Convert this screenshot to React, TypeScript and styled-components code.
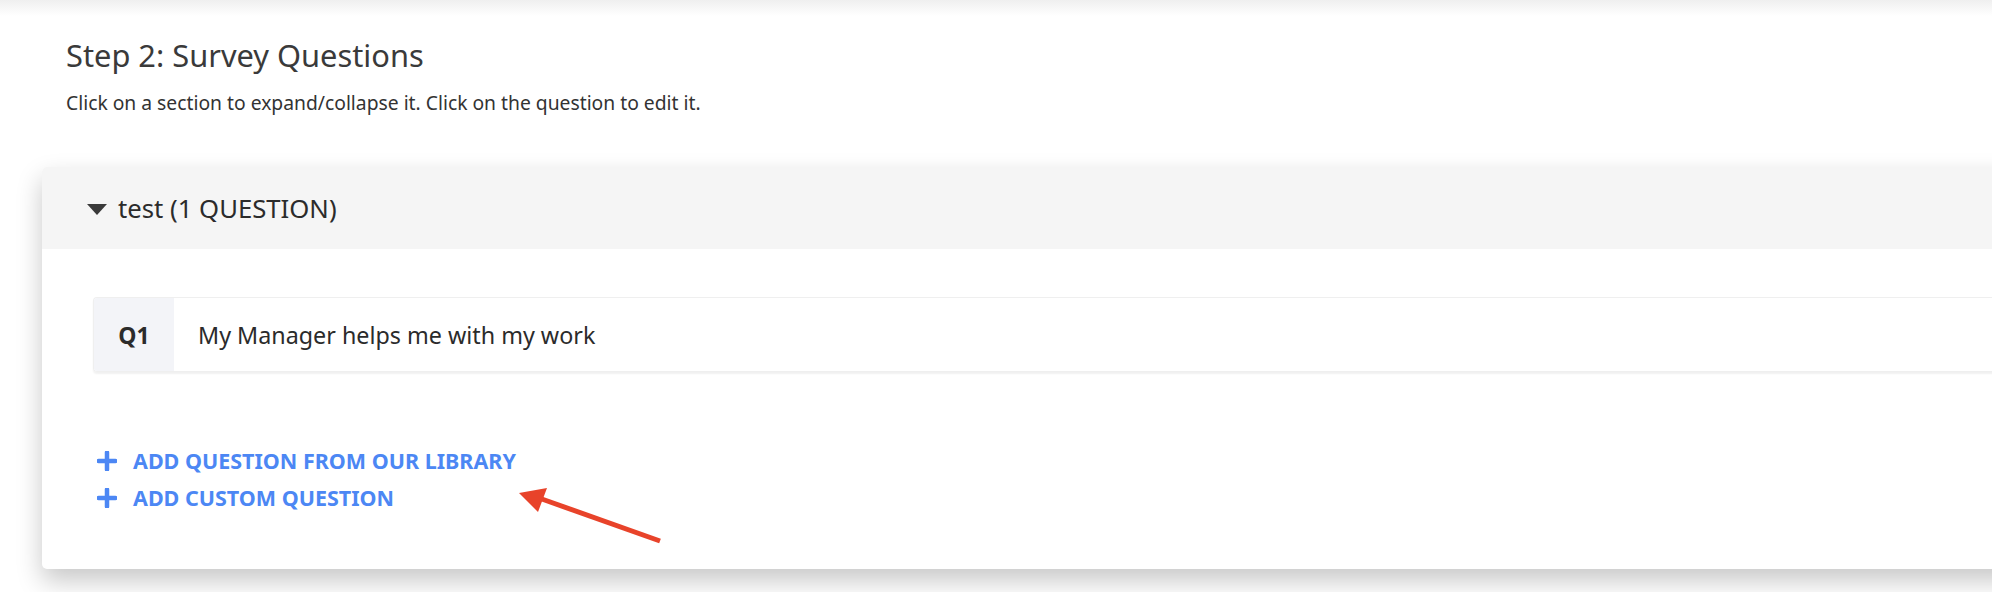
import styled, { createGlobalStyle } from "styled-components";

const GlobalStyle = createGlobalStyle`
  html, body {
    margin: 0;
    padding: 0;
    background: #ffffff;
    overflow: hidden;
  }
  body {
    font-family: "Noto Sans", Roboto, sans-serif;
    color: #333333;
  }
`;

const Page = styled.div`
  position: relative;
  width: 1992px;
  height: 592px;
  overflow: hidden;
`;

const TopShade = styled.div`
  height: 16px;
  background: linear-gradient(#efefef, #ffffff);
`;

const Intro = styled.div`
  padding-left: 66px;
`;

const Title = styled.h2`
  margin: 22px 0 0;
  font-size: 30.8px;
  line-height: 34px;
  font-weight: 400;
  color: #3a3a3a;
`;

const Subtitle = styled.p`
  margin: 19px 0 0;
  font-size: 19.3px;
  line-height: 24px;
  color: #333333;
`;

const Card = styled.section`
  margin: 52px 0 0 42px;
  width: 2000px;
  height: 402px;
  background: #ffffff;
  border-radius: 5px;
  box-shadow: 0 12px 26px rgba(0, 0, 0, 0.22);
  overflow: hidden;
`;

const SectionHeader = styled.div`
  height: 82px;
  background: #f5f5f5;
  display: flex;
  align-items: center;
  gap: 11px;
  padding-left: 45px;
  font-size: 25.7px;
  color: #2b2b2b;
  cursor: pointer;
`;

const Caret = styled.span`
  width: 0;
  height: 0;
  border-left: 10px solid transparent;
  border-right: 10px solid transparent;
  border-top: 11px solid #3a3a3a;
  margin-top: 2px;
`;

const SectionBody = styled.div`
  padding: 48px 0 0 51px;
`;

const QuestionRow = styled.div`
  display: flex;
  height: 73px;
  border: 1px solid #efefef;
  border-right: none;
  border-radius: 4px 0 0 4px;
  box-shadow: 0 2px 2px rgba(0, 0, 0, 0.06);
  overflow: hidden;
  cursor: pointer;
`;

const QuestionNumber = styled.div`
  width: 80px;
  background: #f3f4f8;
  display: flex;
  align-items: center;
  justify-content: center;
  font-size: 23px;
  font-weight: 700;
  color: #2b2b2b;
`;

const QuestionText = styled.div`
  display: flex;
  align-items: center;
  padding-left: 24px;
  font-size: 23.3px;
  color: #2b2b2b;
`;

const Actions = styled.div`
  margin-top: 76px;
  display: flex;
  flex-direction: column;
  gap: 11px;
`;

const ActionLink = styled.a`
  display: flex;
  align-items: center;
  gap: 16px;
  padding-left: 4px;
  font-size: 21.5px;
  line-height: 26px;
  font-weight: 700;
  color: #4c87f4;
  text-decoration: none;
  cursor: pointer;
`;

const Arrow = styled.svg`
  position: absolute;
  left: 505px;
  top: 478px;
`;

const Plus = () => (
  <svg width="20" height="20" viewBox="0 0 20 20">
    <path
      d="M10 1.5v17M1.5 10h17"
      stroke="#4c87f4"
      strokeWidth="4.5"
      strokeLinecap="round"
    />
  </svg>
);

export default function App() {
  return (
    <Page>
      <GlobalStyle />
      <TopShade />
      <Intro>
        <Title>Step 2: Survey Questions</Title>
        <Subtitle>
          Click on a section to expand/collapse it. Click on the question to edit it.
        </Subtitle>
      </Intro>
      <Card>
        <SectionHeader>
          <Caret />
          <span>test (1 QUESTION)</span>
        </SectionHeader>
        <SectionBody>
          <QuestionRow>
            <QuestionNumber>Q1</QuestionNumber>
            <QuestionText>My Manager helps me with my work</QuestionText>
          </QuestionRow>
          <Actions>
            <ActionLink>
              <Plus />
              ADD QUESTION FROM OUR LIBRARY
            </ActionLink>
            <ActionLink>
              <Plus />
              ADD CUSTOM QUESTION
            </ActionLink>
          </Actions>
        </SectionBody>
      </Card>
      <Arrow width="170" height="75" viewBox="0 0 170 75">
        <line x1="155" y1="63" x2="34" y2="20" stroke="#e8432a" strokeWidth="5" />
        <polygon points="14,15 42,10 33,34" fill="#e8432a" />
      </Arrow>
    </Page>
  );
}
